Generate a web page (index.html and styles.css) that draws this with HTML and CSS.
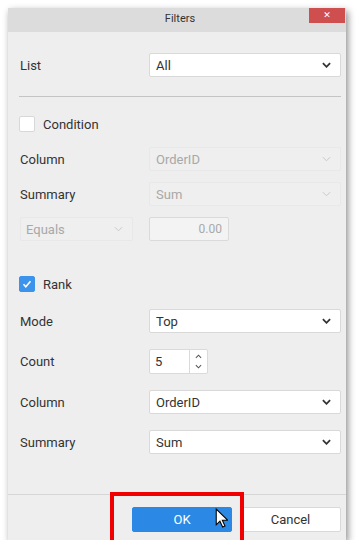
FILE: index.html
```html
<!DOCTYPE html>
<html lang="en">
<head>
    <meta charset="UTF-8">
    <meta name="viewport" content="width=device-width, initial-scale=1.0">
    <title>Filters</title>
    <link rel="stylesheet" href="styles.css">
</head>
<body>
    <div class="dialog">
        <div class="title-bar">
            <span class="title">Filters</span>
            <button class="close-btn">&#x2715;</button>
        </div>

        <div class="dialog-body">
            <div class="row row-list">
                <span class="label">List</span>
                <div class="select">All<svg class="chev" viewBox="0 0 10 6"><path d="M1 1l4 4 4-4"/></svg></div>
            </div>

            <div class="divider"></div>

            <div class="check-row row-condition">
                <span class="checkbox"></span>
                <span class="label">Condition</span>
            </div>

            <div class="row row-gap-15">
                <span class="label">Column</span>
                <div class="select disabled">OrderID<svg class="chev" viewBox="0 0 10 6"><path d="M1 1l4 4 4-4"/></svg></div>
            </div>
            <div class="row row-gap-11">
                <span class="label">Summary</span>
                <div class="select disabled">Sum<svg class="chev" viewBox="0 0 10 6"><path d="M1 1l4 4 4-4"/></svg></div>
            </div>
            <div class="row row-gap-11">
                <div class="select disabled small">Equals<svg class="chev" viewBox="0 0 10 6"><path d="M1 1l4 4 4-4"/></svg></div>
                <div class="value-input">0.00</div>
            </div>

            <div class="check-row row-rank">
                <span class="checkbox checked"><svg viewBox="0 0 12 12"><path d="M2.5 6.2l2.3 2.5 4.7-5.4"/></svg></span>
                <span class="label">Rank</span>
            </div>

            <div class="row row-gap-17">
                <span class="label">Mode</span>
                <div class="select">Top<svg class="chev" viewBox="0 0 10 6"><path d="M1 1l4 4 4-4"/></svg></div>
            </div>
            <div class="row row-gap-16">
                <span class="label">Count</span>
                <div class="numeric">
                    <span class="num-value">5</span>
                    <span class="spinner">
                        <svg viewBox="0 0 8 5"><path d="M1 4l3-3 3 3"/></svg>
                        <svg viewBox="0 0 8 5"><path d="M1 1l3 3 3-3"/></svg>
                    </span>
                </div>
            </div>
            <div class="row row-gap-17">
                <span class="label">Column</span>
                <div class="select">OrderID<svg class="chev" viewBox="0 0 10 6"><path d="M1 1l4 4 4-4"/></svg></div>
            </div>
            <div class="row row-gap-16">
                <span class="label">Summary</span>
                <div class="select">Sum<svg class="chev" viewBox="0 0 10 6"><path d="M1 1l4 4 4-4"/></svg></div>
            </div>
        </div>

        <div class="footer">
            <button class="btn btn-ok">OK</button>
            <button class="btn btn-cancel">Cancel</button>
        </div>
    </div>

    <div class="highlight"></div>
    <svg class="cursor" viewBox="0 0 12 19"><path d="M1 1v15l3.5-3.5 2.6 5.6 2.2-1-2.5-5.4H12z"/></svg>
</body>
</html>
```

FILE: styles.css
```css
body {
    font-family: Roboto, "Noto Sans", Arial, sans-serif;
    background-color: #fff;
    margin: 0;
    padding: 8px 0 0 8px;
    position: relative;
    color: #333;
    font-size: 13px;
}
.dialog {
    width: 338px;
    height: 532px;
    background: #eeeeee;
    box-shadow: 2px 3px 7px rgba(0,0,0,0.45);
    display: flex;
    flex-direction: column;
}
.title-bar {
    height: 24px;
    background: #dcdcdc;
    position: relative;
    display: flex;
    align-items: center;
    justify-content: center;
    flex-shrink: 0;
}
.title {
    font-size: 11px;
    color: #333;
    margin-top: -3px;
    margin-left: 6px;
}
.close-btn {
    position: absolute;
    top: 0;
    right: 1px;
    width: 36px;
    height: 15px;
    border: none;
    padding: 0;
    background: #cf4f4f;
    color: #fff;
    font-size: 9px;
    line-height: 15px;
    font-family: "DejaVu Sans", sans-serif;
}
.dialog-body {
    flex: 1;
    padding: 21px 5px 0 12px;
}
.row {
    display: flex;
    align-items: center;
    height: 24px;
}
.row .label {
    width: 129px;
}
.row-gap-11 { margin-top: 11px; }
.row-gap-15 { margin-top: 15px; }
.row-gap-16 { margin-top: 16px; }
.row-gap-17 { margin-top: 17px; }
.divider {
    height: 1px;
    background: #c4c4c4;
    margin: 19px 0 0 -1px;
}
.check-row {
    display: flex;
    align-items: center;
    height: 16px;
    margin-left: -1px;
}
.row-condition { margin-top: 19px; }
.row-rank { margin-top: 35px; }
.checkbox {
    width: 14px;
    height: 14px;
    border: 1px solid #d8d8d8;
    border-radius: 2px;
    background: #fff;
    margin-right: 8px;
    display: flex;
    align-items: center;
    justify-content: center;
}
.checkbox.checked {
    background: #3b93ec;
    border-color: #3b93ec;
}
.checkbox svg {
    width: 12px;
    height: 12px;
    fill: none;
    stroke: #fff;
    stroke-width: 1.6;
}
.select {
    width: 192px;
    height: 24px;
    box-sizing: border-box;
    background: #fff;
    border: 1px solid #d9d9d9;
    border-radius: 2px;
    display: flex;
    align-items: center;
    justify-content: space-between;
    padding: 0 9px 0 6px;
    color: #333;
}
.chev {
    width: 9px;
    height: 6px;
    fill: none;
    stroke: #333;
    stroke-width: 2;
}
.select.disabled {
    background: #efefef;
    border-color: #e8e8e8;
    color: #a8a8a8;
}
.select.disabled .chev {
    stroke: #c4c4c4;
    stroke-width: 1;
}
.select.small {
    width: 113px;
    margin-right: 16px;
    padding-left: 5px;
}
.value-input {
    width: 80px;
    height: 24px;
    box-sizing: border-box;
    background: #f3f3f3;
    border: 1px solid #dadada;
    border-radius: 2px;
    text-align: right;
    line-height: 22px;
    padding-right: 6px;
    color: #a8a8a8;
    font-size: 12px;
}
.numeric {
    width: 59px;
    height: 25px;
    box-sizing: border-box;
    background: #fff;
    border: 1px solid #dadada;
    border-radius: 2px;
    display: flex;
}
.num-value {
    width: 40px;
    line-height: 23px;
    padding-left: 5px;
    border-right: 1px solid #dadada;
    box-sizing: border-box;
}
.spinner {
    flex: 1;
    display: flex;
    flex-direction: column;
    align-items: center;
    justify-content: center;
    gap: 5px;
}
.spinner svg {
    width: 7px;
    height: 5px;
    fill: none;
    stroke: #555;
    stroke-width: 1.2;
}
.footer {
    height: 46px;
    border-top: 1px solid #d6d6d6;
    box-sizing: border-box;
    display: flex;
    justify-content: flex-end;
    align-items: flex-start;
    padding: 12px 5px 0 0;
    gap: 8px;
}
.btn {
    height: 25px;
    border-radius: 2px;
    font-family: Roboto, Arial, sans-serif;
    font-size: 13px;
    padding: 0;
    box-sizing: border-box;
}
.btn-ok {
    width: 100px;
    background: #2b88e4;
    border: 1px solid #2b88e4;
    color: #fff;
}
.btn-cancel {
    width: 101px;
    background: #fff;
    border: 1px solid #d9d9d9;
    color: #333;
}
.highlight {
    position: absolute;
    left: 110px;
    top: 492px;
    width: 126px;
    height: 45px;
    border: 4px solid #f00000;
}
.cursor {
    position: absolute;
    left: 215px;
    top: 508px;
    width: 13px;
    height: 20px;
    fill: #fff;
    stroke: #000;
    stroke-width: 1;
}
```
